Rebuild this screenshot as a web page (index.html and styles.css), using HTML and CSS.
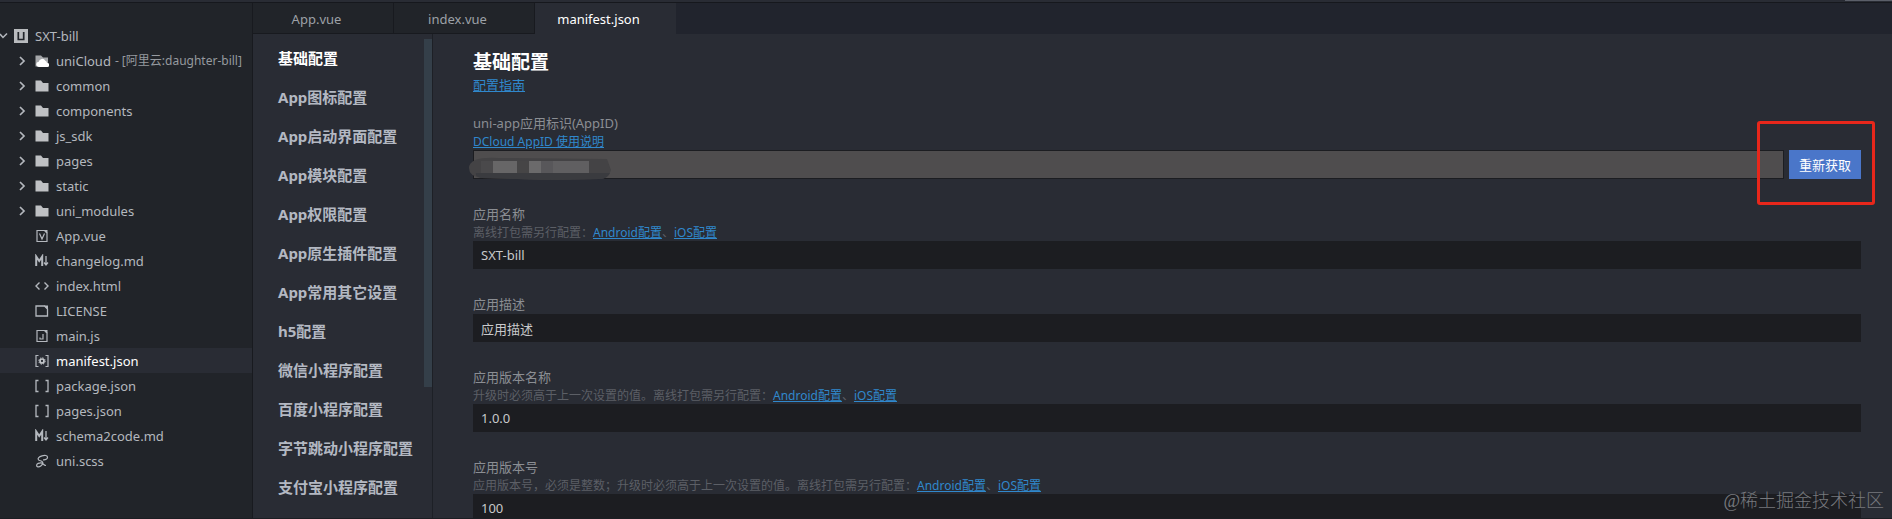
FILE: index.html
```html
<!DOCTYPE html>
<html lang="zh-CN">
<head>
<meta charset="utf-8">
<title>manifest.json</title>
<link rel="stylesheet" href="styles.css">
</head>
<body>
<svg class="defs" aria-hidden="true">
  <symbol id="chev" viewBox="0 0 8 10"><path d="M2 1l4 4-4 4" fill="none" stroke="#b4b8be" stroke-width="1.7"/></symbol>
  <symbol id="folder" viewBox="0 0 14 14"><path d="M0.500 1.500h5.500l2 2.500h5.500v8.500h-13z" fill="#bfc1c4"/></symbol>
  <symbol id="cloud" viewBox="0 0 14 14"><path d="M0.500 1.500h5.500l2 2h5v9h-12.500z" fill="#a5a7aa"/><path d="M4 13a2.600 2.600 0 0 1-.3-5.200 3.500 3.500 0 0 1 6.600-1A2.500 2.500 0 0 1 12 9a2 2 0 0 1 .5 4z" fill="#fff"/></symbol>
  <symbol id="vue" viewBox="0 0 14 14"><path d="M2 1.500h7.500l2.500 2.500v8.500H2zM4.500 4.500L7 10l2.500-5.500" fill="none" stroke="#b4b8be" stroke-width="1.200"/><path d="M9 1h3.500v3.500z" fill="#b4b8be"/></symbol>
  <symbol id="md" viewBox="0 0 14 14"><path d="M1.200 12V2.500L4.200 7l3-4.500V12" fill="none" stroke="#b4b8be" stroke-width="2"/><path d="M11 2v9M9 8.500l2 2.500 2-2.500" fill="none" stroke="#b4b8be" stroke-width="1.300"/></symbol>
  <symbol id="html" viewBox="0 0 14 14"><path d="M4.500 3.500L1 7l3.500 3.500M9.500 3.500L13 7l-3.500 3.500" fill="none" stroke="#b4b8be" stroke-width="1.400"/></symbol>
  <symbol id="file" viewBox="0 0 14 14"><path d="M1 2h8.500l3 3v7H1z" fill="none" stroke="#b4b8be" stroke-width="1.300"/><path d="M9 1.500h4V5.500z" fill="#b4b8be"/></symbol>
  <symbol id="js" viewBox="0 0 14 14"><path d="M2 1.500h7.500l2.500 2.500v8.500H2zM8 5v5H5V8.500" fill="none" stroke="#b4b8be" stroke-width="1.200"/><path d="M9 1h3.500v3.500z" fill="#b4b8be"/></symbol>
  <symbol id="json" viewBox="0 0 14 14"><path d="M3.500 1.500H1v11h2.500M10.500 1.500H13v11h-2.500" fill="none" stroke="#b4b8be" stroke-width="1.300"/></symbol>
  <symbol id="manifest" viewBox="0 0 14 14"><path d="M3.500 1.500H1v11h2.500M10.500 1.500H13v11h-2.500" fill="none" stroke="#b4b8be" stroke-width="1.200"/><circle cx="7" cy="7" r="2" fill="none" stroke="#c5c8cc" stroke-width="1.700"/><circle cx="7" cy="7" r="3.200" fill="none" stroke="#c5c8cc" stroke-width="1" stroke-dasharray="1.300 1.213"/></symbol>
  <symbol id="scss" viewBox="0 0 14 14"><path d="M8 5.800c2.500.4 4.500-.8 4.500-2.600S10 1 7 1.800 2.300 4.500 3.500 5.800s4.700 1 4.300 3.400-3.300 4-5 3.600-1.600-2.500.4-3.400 4-.6 5 .6 1.500 1.500 2.800 1.500" fill="none" stroke="#b4b8be" stroke-width="1.200"/></symbol>
</svg>
<div class="app">
  <div class="topline"></div>
  <div class="workspace">
    <aside class="sidebar">
      <div class="root"><svg class="down" viewBox="0 0 8 8"><path d="M0 2l3 3.500L7 1.500" fill="none" stroke="#b4b8be" stroke-width="1.500"/></svg><svg class="proj" viewBox="0 0 14 14"><path d="M0 0h14v14H0z" fill="#b9bbbe"/><path d="M4.300 3v7.500h5.400V3" fill="none" stroke="#22252a" stroke-width="1.700"/></svg><span>SXT-bill</span></div>
      <ul class="tree">
        <li><svg class="chev"><use href="#chev"/></svg><svg class="icon"><use href="#cloud"/></svg><span>uniCloud</span><span class="note">- [阿里云:daughter-bill]</span></li>
        <li><svg class="chev"><use href="#chev"/></svg><svg class="icon"><use href="#folder"/></svg><span>common</span></li>
        <li><svg class="chev"><use href="#chev"/></svg><svg class="icon"><use href="#folder"/></svg><span>components</span></li>
        <li><svg class="chev"><use href="#chev"/></svg><svg class="icon"><use href="#folder"/></svg><span>js_sdk</span></li>
        <li><svg class="chev"><use href="#chev"/></svg><svg class="icon"><use href="#folder"/></svg><span>pages</span></li>
        <li><svg class="chev"><use href="#chev"/></svg><svg class="icon"><use href="#folder"/></svg><span>static</span></li>
        <li><svg class="chev"><use href="#chev"/></svg><svg class="icon"><use href="#folder"/></svg><span>uni_modules</span></li>
        <li class="leaf"><svg class="icon"><use href="#vue"/></svg><span>App.vue</span></li>
        <li class="leaf"><svg class="icon"><use href="#md"/></svg><span>changelog.md</span></li>
        <li class="leaf"><svg class="icon"><use href="#html"/></svg><span>index.html</span></li>
        <li class="leaf"><svg class="icon"><use href="#file"/></svg><span>LICENSE</span></li>
        <li class="leaf"><svg class="icon"><use href="#js"/></svg><span>main.js</span></li>
        <li class="leaf selected"><svg class="icon"><use href="#manifest"/></svg><span>manifest.json</span></li>
        <li class="leaf"><svg class="icon"><use href="#json"/></svg><span>package.json</span></li>
        <li class="leaf"><svg class="icon"><use href="#json"/></svg><span>pages.json</span></li>
        <li class="leaf"><svg class="icon"><use href="#md"/></svg><span>schema2code.md</span></li>
        <li class="leaf"><svg class="icon"><use href="#scss"/></svg><span>uni.scss</span></li>
      </ul>
    </aside>
    <div class="editor">
      <div class="tabs" role="tablist">
        <button class="tab" role="tab">App.vue</button>
        <button class="tab" role="tab">index.vue</button>
        <button class="tab active" role="tab" aria-selected="true">manifest.json</button>
      </div>
      <div class="panes">
        <nav class="menu">
          <ul>
            <li class="current">基础配置</li>
            <li>App图标配置</li>
            <li>App启动界面配置</li>
            <li>App模块配置</li>
            <li>App权限配置</li>
            <li>App原生插件配置</li>
            <li>App常用其它设置</li>
            <li>h5配置</li>
            <li>微信小程序配置</li>
            <li>百度小程序配置</li>
            <li>字节跳动小程序配置</li>
            <li>支付宝小程序配置</li>
          </ul>
          <div class="scrollbar"></div>
        </nav>
        <main class="form">
          <h1>基础配置</h1>
          <a class="guide" href="#guide">配置指南</a>
          <div class="field">
            <label for="appid">uni-app应用标识(AppID)</label>
            <p><a href="#appid-help">DCloud AppID 使用说明</a></p>
            <div class="row">
              <input id="appid" class="locked" type="text" readonly>
              <button class="fetch">重新获取</button>
              <svg class="mask" viewBox="0 0 143 27" aria-hidden="true">
                <path d="M6 6Q14 3 30 4L138 5 142 16Q140 24 132 25L80 26 12 24Q0 22 0 14 0 9 6 6z" fill="#444345"/>
                <path d="M7 19h134q-3 6-10 6l-50 1-69-2q-6-1-5-5z" fill="#3a3b3f"/>
                <path d="M12 7h12v12H12z" fill="#4a494b"/>
                <path d="M24 7h24v12H24z" fill="#676667"/>
                <path d="M48 7h12v12H48z" fill="#464546"/>
                <path d="M60 7h12v12H60z" fill="#6b6a6b"/>
                <path d="M72 7h12v12H72z" fill="#58575a"/>
                <path d="M84 7h36v12H84z" fill="#605f61"/>
              </svg>
              <div class="highlight"></div>
            </div>
          </div>
          <div class="field">
            <label for="name">应用名称</label>
            <p>离线打包需另行配置：<a href="#android">Android配置</a>、<a href="#ios">iOS配置</a></p>
            <input id="name" type="text" value="SXT-bill">
          </div>
          <div class="field">
            <label for="desc">应用描述</label>
            <input id="desc" type="text" value="应用描述">
          </div>
          <div class="field">
            <label for="vname">应用版本名称</label>
            <p>升级时必须高于上一次设置的值。离线打包需另行配置：<a href="#android">Android配置</a>、<a href="#ios">iOS配置</a></p>
            <input id="vname" type="text" value="1.0.0">
          </div>
          <div class="field">
            <label for="vcode">应用版本号</label>
            <p>应用版本号，必须是整数；升级时必须高于上一次设置的值。离线打包需另行配置：<a href="#android">Android配置</a>、<a href="#ios">iOS配置</a></p>
            <input id="vcode" type="text" value="100">
          </div>
        </main>
      </div>
    </div>
  </div>
  <div class="watermark">@稀土掘金技术社区</div>
</div>
</body>
</html>
```
FILE: styles.css
```css
* { box-sizing: border-box; }
body {
  margin: 0;
  background: #292c34;
  color: #b4b8be;
  font: 13px/18px "Noto Sans", "Noto Sans CJK SC", sans-serif;
}
ul { list-style: none; margin: 0; padding: 0; }
button, input { font: inherit; border: 0; border-radius: 0; }
.defs { display: none; }
.app {
  position: relative;
  display: flex;
  flex-direction: column;
  height: 100vh;
  overflow: hidden;
  border-bottom: 1px solid #1c1e23;
}
.topline {
  flex: none;
  height: 3px;
  background: linear-gradient(#5b5f69, #5b5f69) right top / 47px 1px no-repeat #292c34;
  border-bottom: 1px solid #16181d;
}
.workspace { display: flex; flex: 1; min-height: 0; }

.sidebar {
  flex: none;
  width: 253px;
  padding-top: 20px;
  background: #212429;
  border-right: 1px solid #181a1f;
  white-space: nowrap;
}
.sidebar svg { flex: none; }
.root, .tree li { display: flex; align-items: center; height: 25px; }
.down { width: 8px; height: 8px; margin-right: 6px; }
.proj { width: 14px; height: 14px; margin-right: 7px; }
.tree li { padding-left: 18px; }
.tree .leaf { padding-left: 35px; }
.chev { width: 8px; height: 10px; margin-right: 9px; }
.icon { width: 14px; height: 14px; margin-right: 7px; }
.note { margin-left: 4px; color: #969a9f; font-size: 12px; }
.tree .selected { background: #292c34; color: #fff; }

.editor { display: flex; flex-direction: column; flex: 1; min-width: 0; }
.tabs { display: flex; flex: none; height: 31px; background: #21242d; }
.tab {
  width: 141px;
  padding: 2px 13px 0 0;
  background: #212429;
  border-right: 1px solid #181a1f;
  border-bottom: 1px solid #181a1f;
  color: #9da1a7;
}
.tab.active { background: #292c34; border-color: #292c34; color: #fff; }
.panes { display: flex; flex: 1; min-height: 0; }
.menu {
  display: flex;
  justify-content: space-between;
  flex: none;
  width: 180px;
  padding: 5px 0 0 25px;
  border-right: 1px solid #1d2026;
  color: #b3b8c2;
  font-size: 15px;
  font-weight: 700;
  line-height: 39px;
  white-space: nowrap;
}
.menu .current { color: #fff; }
.scrollbar { flex: none; width: 8px; height: 348px; background: #343f49; }

.form { flex: 1; min-width: 0; padding: 15px 31px 0 40px; }
h1 { margin: 0; color: #fff; font-size: 19px; line-height: 27px; }
a { color: #3088cc; text-decoration: underline; }
.guide { display: block; width: max-content; margin-bottom: 20px; }
.field { margin-bottom: 26px; color: #8b8e93; }
.field label { display: block; padding-bottom: 1px; }
.field p { margin: 0; color: #5c5f66; font-size: 12px; line-height: 17px; }
.field input {
  display: block;
  width: 100%;
  height: 28px;
  padding: 0 8px;
  background: #1c1d21;
  color: #c8c9cb;
}
.row { position: relative; display: flex; gap: 5px; }
.row .locked {
  flex: 1;
  min-width: 0;
  height: 29px;
  background: #4f4d4e;
  border: 1px solid #1c1d21;
}
.fetch { flex: none; width: 72px; height: 29px; padding: 0; background: #4a76c9; color: #fff; }
.mask { position: absolute; left: -4px; top: 4px; width: 143px; height: 27px; }
.highlight {
  position: absolute;
  right: -14px;
  top: -29px;
  width: 118px;
  height: 84px;
  border: 3px solid #e8271b;
  border-radius: 3px;
  pointer-events: none;
}
.watermark {
  position: absolute;
  right: 8px;
  bottom: 5px;
  color: #77797e;
  font: 300 18px/24px "Liberation Serif", "Noto Sans CJK SC", serif;
}
```
